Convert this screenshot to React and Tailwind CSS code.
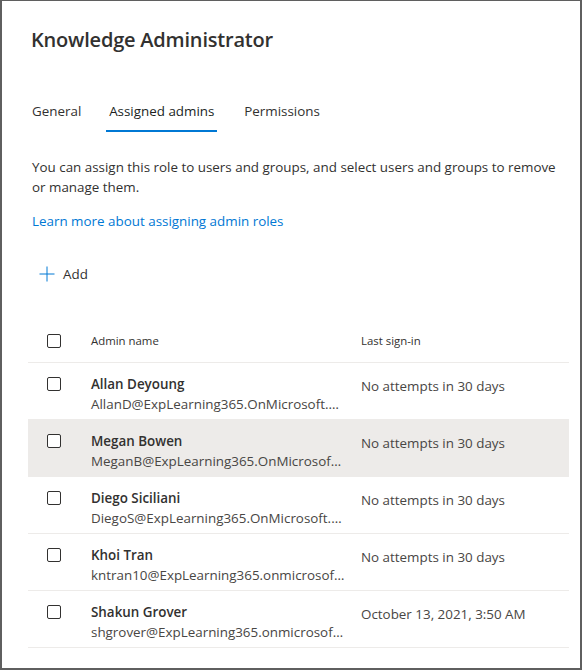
import React from 'react';

const admins = [
  { name: 'Allan Deyoung', email: 'AllanD@ExpLearning365.OnMicrosoft.…', last: 'No attempts in 30 days' },
  { name: 'Megan Bowen', email: 'MeganB@ExpLearning365.OnMicrosof…', last: 'No attempts in 30 days', hover: true },
  { name: 'Diego Siciliani', email: 'DiegoS@ExpLearning365.OnMicrosoft.…', last: 'No attempts in 30 days' },
  { name: 'Khoi Tran', email: 'kntran10@ExpLearning365.onmicrosof…', last: 'No attempts in 30 days' },
  { name: 'Shakun Grover', email: 'shgrover@ExpLearning365.onmicrosof…', last: 'October 13, 2021, 3:50 AM' },
];

const Checkbox = () => (
  <div className="w-[14px] h-[14px] border border-[#323130] rounded-[2px] bg-white shrink-0" />
);

const App = () => {
  return (
    <div
      className="w-[582px] h-[670px] bg-white border-x-2 border-b-2 border-t border-[#5f5f5f] overflow-hidden text-[#323130]"
      style={{ fontFamily: '"Open Sans", "Noto Sans", sans-serif' }}
    >
      <div className="pl-[30px] pt-[25px]">
        {/* Title */}
        <h1 className="text-[20px] leading-[28px] font-semibold tracking-[-0.2px] -ml-px">
          Knowledge Administrator
        </h1>

        {/* Tabs */}
        <div className="flex mt-[47px] -ml-0.5 text-[13.4px] leading-5">
          <div className="flex flex-col px-0.5">
            <span>General</span>
            <div className="mt-[9px] h-[2px]" />
          </div>
          <div className="flex flex-col ml-[23px] w-[111px] items-center">
            <span className="text-[#201f1e]">Assigned admins</span>
            <div className="mt-[9px] h-[2px] w-full bg-[#0078d4]" />
          </div>
          <div className="flex flex-col px-0.5 ml-[25px]">
            <span>Permissions</span>
            <div className="mt-[9px] h-[2px]" />
          </div>
        </div>

        {/* Description */}
        <p className="mt-[25px] text-[13.4px] leading-5">
          <span className="block whitespace-nowrap">
            You can assign this role to users and groups, and select users and groups to remove
          </span>
          <span className="block">or manage them.</span>
        </p>

        <div className="mt-[14px] text-[13.4px] leading-5 text-[#0078d4]">
          Learn more about assigning admin roles
        </div>

        {/* Add button */}
        <div className="mt-[27px] h-[32px] flex items-center pl-[7px] gap-2 text-[13.4px]">
          <svg width="16" height="16" viewBox="0 0 16 16" fill="none">
            <path d="M8 0.5V15.5M0.5 8H15.5" stroke="#0078d4" strokeWidth="1" />
          </svg>
          <span>Add</span>
        </div>

        {/* Table */}
        <div className="mt-[30px] ml-[-4px] w-[541px]">
          <div className="h-[43px] border-b border-[#edebe9] flex items-center text-[11.4px]">
            <div className="pl-[19px] w-[63px]">
              <Checkbox />
            </div>
            <div className="w-[254px]">Admin name</div>
            <div className="ml-[16px]">Last sign-in</div>
          </div>

          {admins.map((a) => (
            <div
              key={a.name}
              className={`h-[57px] border-b border-[#edebe9] flex items-start ${a.hover ? 'bg-[#edebe9]' : ''}`}
            >
              <div className="pl-[19px] w-[63px] pt-[14px]">
                <Checkbox />
              </div>
              <div className="w-[254px] pt-[11px] text-[13.4px] leading-5 min-w-0">
                <div className="font-semibold text-[#323130]">{a.name}</div>
                <div className="whitespace-nowrap text-[#484644]">{a.email}</div>
              </div>
              <div className="ml-[16px] pt-[13px] text-[13.4px] leading-5 text-[#484644]">
                {a.last}
              </div>
            </div>
          ))}
        </div>
      </div>
    </div>
  );
};

export default App;
